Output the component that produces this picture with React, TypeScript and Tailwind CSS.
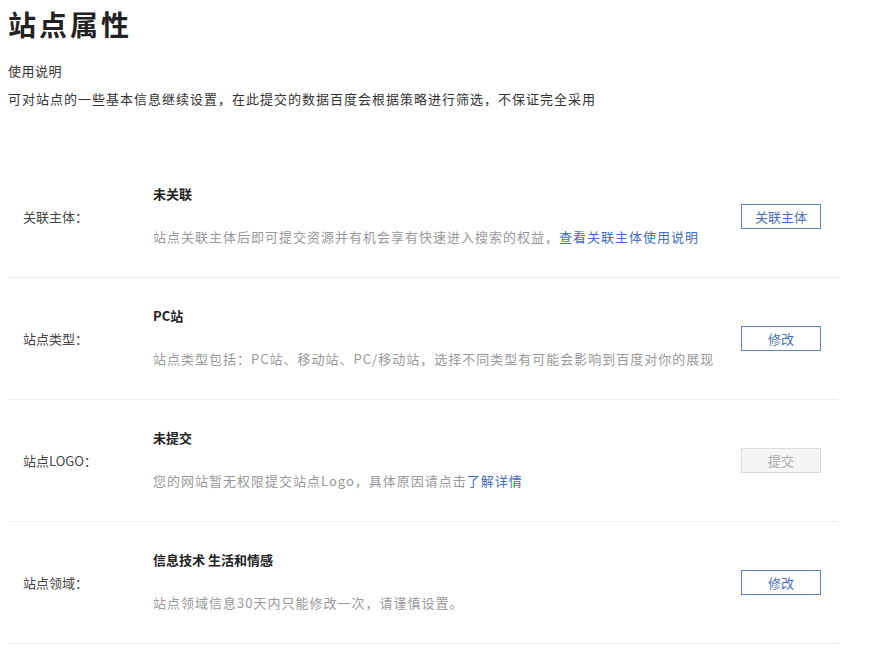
import React from "react";

type Row = {
  label: string;
  title: string;
  desc: React.ReactNode;
  action: string;
  disabled?: boolean;
};

const link = "text-[#3f6cc0]";

const rows: Row[] = [
  {
    label: "关联主体：",
    title: "未关联",
    desc: (
      <>
        站点关联主体后即可提交资源并有机会享有快速进入搜索的权益，
        <span className={link}>查看关联主体使用说明</span>
      </>
    ),
    action: "关联主体",
  },
  {
    label: "站点类型：",
    title: "PC站",
    desc: "站点类型包括：PC站、移动站、PC/移动站，选择不同类型有可能会影响到百度对你的展现",
    action: "修改",
  },
  {
    label: "站点LOGO：",
    title: "未提交",
    desc: (
      <>
        您的网站暂无权限提交站点Logo，具体原因请点击
        <span className={link}>了解详情</span>
      </>
    ),
    action: "提交",
    disabled: true,
  },
  {
    label: "站点领域：",
    title: "信息技术 生活和情感",
    desc: "站点领域信息30天内只能修改一次，请谨慎设置。",
    action: "修改",
  },
];

export default function App() {
  return (
    <div
      className="min-h-[655px] w-[870px] bg-white pl-2 text-[#333]"
      style={{ fontFamily: '"Microsoft YaHei", "Noto Sans CJK SC", "Noto Sans", sans-serif' }}
    >
      <h1 className="pt-1 text-[28px] font-bold leading-[40px] tracking-[3px] text-[#222]">站点属性</h1>
      <p className="mt-[17px] text-[13px] leading-5 tracking-[0.5px]">使用说明</p>
      <p className="mt-2 text-[13px] leading-5 tracking-[1px]">
        可对站点的一些基本信息继续设置，在此提交的数据百度会根据策略进行筛选，不保证完全采用
      </p>

      <div className="mt-[47px] w-[830px]">
        {rows.map((r) => (
          <div key={r.label} className="flex h-[122px] items-center border-b border-[#eeeeee] pl-[15px] pr-[17px]">
            <div className="w-[130px] text-[13px] leading-5 text-[#444]">{r.label}</div>
            <div className="-mt-[3px] flex-1">
              <div className="text-[13px] font-bold leading-5 text-[#222]">{r.title}</div>
              <div className="mt-[23px] text-[13px] leading-5 tracking-[1px] text-[#999]">{r.desc}</div>
            </div>
            <button
              className={
                r.disabled
                  ? "h-[25px] w-[80px] border border-[#dcdcdc] bg-[#f5f5f5] text-[13px] text-[#aaa]"
                  : "h-[25px] w-[80px] border border-[#6282c0] bg-white text-[13px] text-[#4a70b8]"
              }
            >
              {r.action}
            </button>
          </div>
        ))}
      </div>
    </div>
  );
}
